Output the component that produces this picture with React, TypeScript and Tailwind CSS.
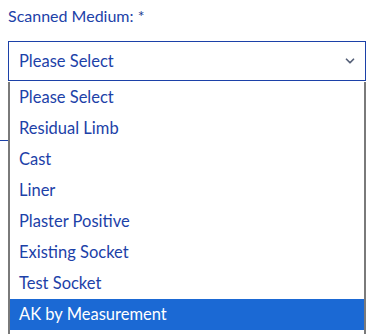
import { ChevronDown } from "lucide-react";

const options = [
  "Please Select",
  "Residual Limb",
  "Cast",
  "Liner",
  "Plaster Positive",
  "Existing Socket",
  "Test Socket",
  "AK by Measurement",
];

export default function App() {
  const selected = "AK by Measurement";

  return (
    <div className="relative h-[334px] w-[373px] overflow-hidden bg-white font-['Lato',sans-serif] text-[#1c41a8]">
      {/* field underline showing behind the open list */}
      <div className="absolute left-0 top-[140px] h-px w-[8px] bg-[#1c41a8]" />

      <div className="px-[8px] pt-[5px] pr-[7px]">
        <label className="block h-[36px] text-[16px] leading-[22px]">
          Scanned Medium: <span className="text-[#1a3a8f]">*</span>
        </label>

        {/* select box */}
        <div className="flex h-[40px] items-center justify-between border border-[#1c41a8] bg-white pl-[10px] pr-[8px] text-[16.5px]">
          <span>Please Select</span>
          <ChevronDown className="h-[14px] w-[14px] text-[#566078]" strokeWidth={3} />
        </div>

        {/* open options list */}
        <div className="mt-px border-x-2 border-x-[#7a7a7a] pb-[10px]">
          {options.map((o) => (
            <div
              key={o}
              className={`flex h-[31px] items-center pb-px pl-[9px] text-[16.5px] ${
                o === selected ? "bg-[#1b69d4] text-white" : ""
              }`}
            >
              {o}
            </div>
          ))}
        </div>
      </div>
    </div>
  );
}
